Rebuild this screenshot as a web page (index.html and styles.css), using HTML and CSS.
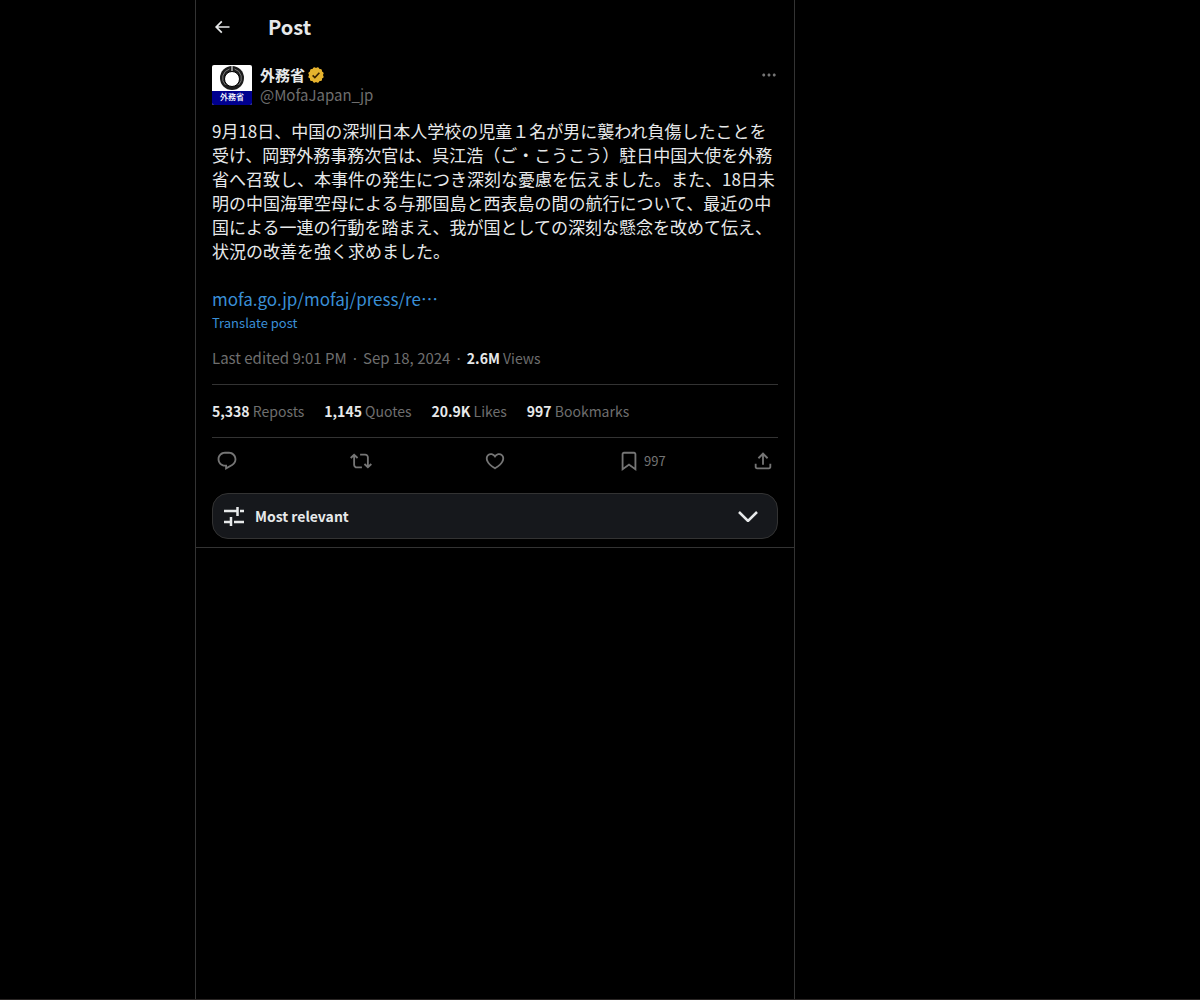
FILE: index.html
```html
<!DOCTYPE html>
<html lang="ja">
<head>
    <meta charset="UTF-8">
    <meta name="viewport" content="width=device-width, initial-scale=1">
    <title>Post</title>
    <link rel="stylesheet" href="styles.css">
</head>

<body>

    <main class="column">
        <header class="topbar">
            <button class="icon_btn back" aria-label="Back">
                <svg viewBox="0 0 24 24"><path d="M7.414 13l5.043 5.04-1.414 1.42L3.586 12l7.457-7.46 1.414 1.42L7.414 11H21v2H7.414z"/></svg>
            </button>
            <h1>Post</h1>
        </header>

        <article class="post">
            <div class="author">
                <a class="avatar" href="#" aria-label="外務省">
                    <svg viewBox="0 0 40 40">
                        <rect width="40" height="40" fill="#fff"/>
                        <rect y="26" width="40" height="14" fill="#00008f"/>
                        <circle cx="20" cy="13" r="12" fill="#1c1c1c"/>
                        <path d="M17.500 4a9.500 9.500 0 0 0-4 16M22.500 4a9.500 9.500 0 0 1 4 16" fill="none" stroke="#777" stroke-width="1"/>
                        <circle cx="20" cy="14" r="7.500" fill="#fff" stroke="#000" stroke-width="1"/>
                        <path d="M20 1v5" stroke="#bbb" stroke-width="1.500"/>
                        <text class="avatar_text" x="20" y="35" text-anchor="middle">外務省</text>
                    </svg>
                </a>
                <div class="names">
                    <a class="name" href="#">外務省
                        <svg class="badge" viewBox="0 0 24 24">
                            <g fill="#e6b32e">
                                <rect x="4" y="4" width="16" height="16" rx="2"/>
                                <rect x="4" y="4" width="16" height="16" rx="2" transform="rotate(30 12 12)"/>
                                <rect x="4" y="4" width="16" height="16" rx="2" transform="rotate(60 12 12)"/>
                            </g>
                            <path d="M7.5 12.5l3 3 6-6.5" fill="none" stroke="#3a2200" stroke-width="2.2"/>
                        </svg>
                    </a>
                    <a class="handle" href="#">@MofaJapan_jp</a>
                </div>
                <button class="icon_btn more" aria-label="More">
                    <svg viewBox="0 0 24 24"><path d="M3 12c0-1.1.9-2 2-2s2 .9 2 2-.9 2-2 2-2-.9-2-2zm9 2c1.1 0 2-.9 2-2s-.9-2-2-2-2 .9-2 2 .9 2 2 2zm7 0c1.1 0 2-.9 2-2s-.9-2-2-2-2 .9-2 2 .9 2 2 2z"/></svg>
                </button>
            </div>

            <p class="text">9月18日、中国の深圳日本人学校の児童１名が男に襲われ負傷したことを受け、岡野外務事務次官は、呉江浩（ご・こうこう）駐日中国大使を外務省へ召致し、本事件の発生につき深刻な憂慮を伝えました。また、18日未明の中国海軍空母による与那国島と西表島の間の航行について、最近の中国による一連の行動を踏まえ、我が国としての深刻な懸念を改めて伝え、状況の改善を強く求めました。</p>
            <a class="link" href="#">mofa.go.jp/mofaj/press/re…</a>
            <button class="translate">Translate post</button>

            <div class="meta">
                <a href="#">Last edited 9:01 PM</a><span class="dot">·</span><a href="#">Sep 18, 2024</a><span class="dot">·</span><span class="views"><b>2.6M</b> Views</span>
            </div>

            <div class="stats">
                <a href="#"><b>5,338</b> Reposts</a>
                <a href="#"><b>1,145</b> Quotes</a>
                <a href="#"><b>20.9K</b> Likes</a>
                <a href="#"><b>997</b> Bookmarks</a>
            </div>

            <div class="actions">
                <div class="action">
                    <button class="icon_btn" aria-label="Reply">
                        <svg viewBox="0 0 24 24"><path d="M1.751 10c0-4.42 3.584-8 8.005-8h4.366c4.49 0 8.129 3.64 8.129 8.13 0 2.96-1.607 5.68-4.196 7.11l-8.054 4.46v-3.69h-.067c-4.49.1-8.183-3.51-8.183-8.01zm8.005-6c-3.317 0-6.005 2.69-6.005 6 0 3.37 2.77 6.08 6.138 6.01l.351-.01h1.761v2.3l5.087-2.81c1.951-1.08 3.163-3.13 3.163-5.36 0-3.39-2.744-6.13-6.129-6.13H9.756z"/></svg>
                    </button>
                </div>
                <div class="action">
                    <button class="icon_btn" aria-label="Repost">
                        <svg viewBox="0 0 24 24"><path d="M4.5 3.88l4.432 4.14-1.364 1.46L5.5 7.55V16c0 1.1.896 2 2 2H13v2H7.5c-2.209 0-4-1.79-4-4V7.55L1.432 9.48.068 8.02 4.5 3.88zM16.5 6H11V4h5.5c2.209 0 4 1.79 4 4v8.45l2.068-1.93 1.364 1.46-4.432 4.14-4.432-4.14 1.364-1.46 2.068 1.93V8c0-1.1-.896-2-2-2z"/></svg>
                    </button>
                </div>
                <div class="action">
                    <button class="icon_btn" aria-label="Like">
                        <svg viewBox="0 0 24 24"><path d="M16.697 5.5c-1.222-.06-2.679.51-3.89 2.16l-.805 1.09-.806-1.09C9.984 6.01 8.526 5.44 7.304 5.5c-1.243.07-2.349.78-2.91 1.91-.552 1.12-.633 2.78.479 4.82 1.074 1.97 3.257 4.27 7.129 6.61 3.87-2.34 6.052-4.64 7.126-6.61 1.111-2.04 1.03-3.7.477-4.82-.561-1.13-1.666-1.84-2.908-1.91zm4.187 7.69c-1.351 2.48-4.001 5.12-8.379 7.67l-.503.3-.504-.3c-4.379-2.55-7.029-5.19-8.382-7.67-1.36-2.5-1.41-4.86-.514-6.67.887-1.79 2.647-2.91 4.601-3.01 1.651-.09 3.368.56 4.798 2.01 1.429-1.45 3.146-2.1 4.796-2.01 1.954.1 3.714 1.22 4.601 3.01.896 1.81.846 4.17-.514 6.67z"/></svg>
                    </button>
                </div>
                <div class="action">
                    <button class="icon_btn" aria-label="Bookmark">
                        <svg viewBox="0 0 24 24"><path d="M4 4.5C4 3.12 5.119 2 6.5 2h11C18.881 2 20 3.12 20 4.5v18.44l-8-5.71-8 5.71V4.5zM6.5 4c-.276 0-.5.22-.5.5v14.56l6-4.29 6 4.29V4.5c0-.28-.224-.5-.5-.5h-11z"/></svg>
                        <span>997</span>
                    </button>
                </div>
                <div class="action">
                    <button class="icon_btn" aria-label="Share">
                        <svg viewBox="0 0 24 24"><path d="M12 2.59l5.7 5.7-1.41 1.42L13 6.41V16h-2V6.41l-3.3 3.3-1.41-1.42L12 2.59zM21 15l-.02 3.51c0 1.38-1.12 2.49-2.5 2.49H5.5C4.11 21 3 19.88 3 18.5V15h2v3.5c0 .28.22.5.5.5h12.98c.28 0 .5-.22.5-.5L19 15h2z"/></svg>
                    </button>
                </div>
            </div>

            <div class="sort">
                <svg class="sort_icon" viewBox="0 0 22 22"><path d="M1 6h14M14.5 2v9M17 6h4M1 17h8M8 12v9M11 17h10"/></svg>
                <select class="sort_select" aria-label="Sort replies">
                    <option>Most relevant</option>
                    <option>Most recent</option>
                    <option>Most liked</option>
                </select>
                <svg class="sort_arrow" viewBox="0 0 20 12"><path d="M1 2l9 9 9-9"/></svg>
            </div>
        </article>
    </main>

</body>
</html>
```
FILE: styles.css
```css
* {margin: 0;padding: 0;box-sizing: border-box;}
body {
    display: grid;
    grid-template-columns: 195fr minmax(0, 600px) 405fr;
    min-height: 100vh;
    background: #000;
    color: #e7e9ea;
    font-family: "Noto Sans CJK JP", "Noto Sans", sans-serif;
    font-size: 14px;
    line-height: 20px;
    border-bottom: 1px solid #2a2625;
}
a {color: inherit;text-decoration: none;}
button, select {font: inherit;color: inherit;background: none;border: none;cursor: pointer;}
svg {display: block;fill: currentColor;}

.column {grid-column: 2;border: solid #333;border-width: 0 1px;}

.icon_btn {display: flex;align-items: center;gap: 4px;}
.icon_btn svg {width: 22px;height: 22px;}

.topbar {display: flex;align-items: center;gap: 36px;height: 53px;padding: 0 16px;}
.topbar h1 {font-size: 20px;line-height: 24px;font-weight: 700;}
.topbar .back svg {width: 20px;height: 20px;}

.post {padding: 12px 16px 8px;border-bottom: 1px solid #333;}

.author {display: flex;align-items: flex-start;gap: 8px;}
.avatar {width: 40px;height: 40px;border-radius: 2px;overflow: hidden;}
.avatar_text {font: 500 8px "Noto Sans CJK JP", sans-serif;fill: #fff;}
.names {flex: 1;display: flex;flex-direction: column;align-items: flex-start;font-size: 15px;}
.name {display: flex;align-items: center;gap: 2px;font-weight: 700;}
.badge {width: 18px;height: 18px;}
.handle {color: #6e6e6e;}
.more {color: #757575;}
.author .more svg {width: 18px;height: 20px;}

.text {margin: 14px 0 24px;font-size: 17px;line-height: 24px;}
.link {display: block;font-size: 17px;line-height: 24px;color: #3a8fd6;}
.translate {display: block;font-size: 13px;line-height: 24px;color: #3a8fd6;}

.meta {padding: 13px 0 16px;font-size: 15px;color: #6e6e6e;}
.meta b, .stats b {color: #e7e9ea;font-weight: 700;}
.views {font-size: 14px;}
.dot {padding: 0 4px;}

.stats {display: flex;flex-wrap: wrap;gap: 20px;padding: 16px 0;border: solid #333;border-width: 1px 0;color: #6e6e6e;}

.actions {display: flex;height: 46px;padding: 0 4px;align-items: center;color: #757575;}
.action {flex: 1;}
.action:last-child {flex: none;}
.action span {font-size: 13px;line-height: 22px;}

.sort {display: flex;align-items: center;height: 46px;margin-top: 9px;padding: 0 19px 0 10px;background: #16181c;border: 1px solid #333;border-radius: 16px;}
.sort svg {fill: none;stroke: currentColor;stroke-width: 2.5;}
.sort_icon {width: 22px;height: 22px;}
.sort_select {flex: 1;height: 44px;padding-left: 10px;appearance: none;font-weight: 700;outline: none;}
.sort_select option {background: #16181c;}
.sort_arrow {width: 20px;height: 12px;}
```
